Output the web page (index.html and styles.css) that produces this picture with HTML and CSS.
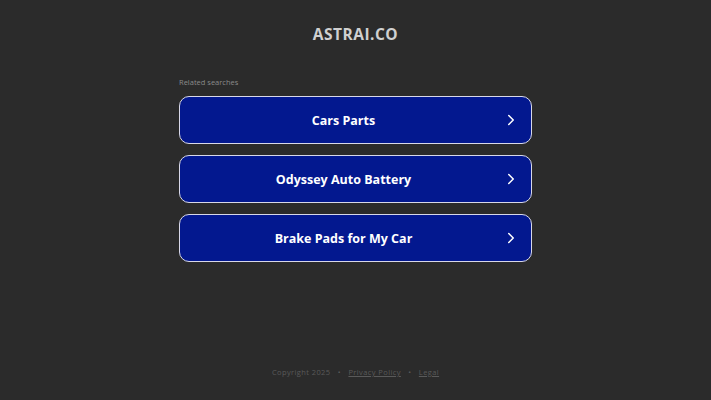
FILE: index.html
```html
<!DOCTYPE html>
<html lang="en">

<head>
    <meta charset="UTF-8">
    <meta name="viewport" content="width=device-width, initial-scale=1.0">
    <title>astrai.co</title>
    <link rel="stylesheet" href="styles.css">
</head>

<body>
    <div class="page">
        <div class="header">ASTRAI.CO</div>

        <div class="container">
            <div class="related">Related searches</div>
            <a class="search" href="#">
                <span class="label">Cars Parts</span>
                <svg class="chevron" viewBox="0 0 10 16" width="8" height="12"><path d="M2 2l6 6-6 6" /></svg>
            </a>
            <a class="search" href="#">
                <span class="label">Odyssey Auto Battery</span>
                <svg class="chevron" viewBox="0 0 10 16" width="8" height="12"><path d="M2 2l6 6-6 6" /></svg>
            </a>
            <a class="search" href="#">
                <span class="label">Brake Pads for My Car</span>
                <svg class="chevron" viewBox="0 0 10 16" width="8" height="12"><path d="M2 2l6 6-6 6" /></svg>
            </a>
        </div>

        <div class="footer">
            Copyright 2025 <span class="dot">&bull;</span>
            <a href="#">Privacy Policy</a> <span class="dot">&bull;</span>
            <a href="#">Legal</a>
        </div>
    </div>
</body>

</html>
```

FILE: styles.css
```css
body {
    background-color: #2b2b2b;
    font-family: 'Open Sans', 'Noto Sans', sans-serif;
    margin: 0;
}

.page {
    min-height: 100vh;
    display: flex;
    flex-direction: column;
    align-items: center;
    box-sizing: border-box;
    padding: 24px 0 22px;
}

.header {
    color: #d0d0d0;
    font-size: 15.5px;
    font-weight: 700;
    line-height: 20px;
    letter-spacing: 0.5px;
}

.container {
    width: 353px;
    margin-top: 33px;
}

.related {
    color: #8a8a8a;
    font-size: 7.5px;
    line-height: 11px;
    margin-bottom: 8px;
}

.search {
    display: flex;
    align-items: center;
    height: 48px;
    box-sizing: border-box;
    padding: 0 16px;
    margin-bottom: 11px;
    background: #03188f;
    border: 1.5px solid #d8d8e8;
    border-radius: 10px;
    color: #fff;
    font-size: 12.5px;
    font-weight: 700;
    text-decoration: none;
}

.label {
    flex: 1;
    text-align: center;
}

.chevron {
    margin-left: 16px;
    fill: none;
    stroke: #fff;
    stroke-width: 2;
    stroke-linecap: round;
    stroke-linejoin: round;
}

.footer {
    margin-top: auto;
    color: #5a5a5a;
    font-size: 7.5px;
    line-height: 12px;
    letter-spacing: 0.4px;
}

.footer a {
    color: #5a5a5a;
}

.dot {
    margin: 0 5px;
}
```
